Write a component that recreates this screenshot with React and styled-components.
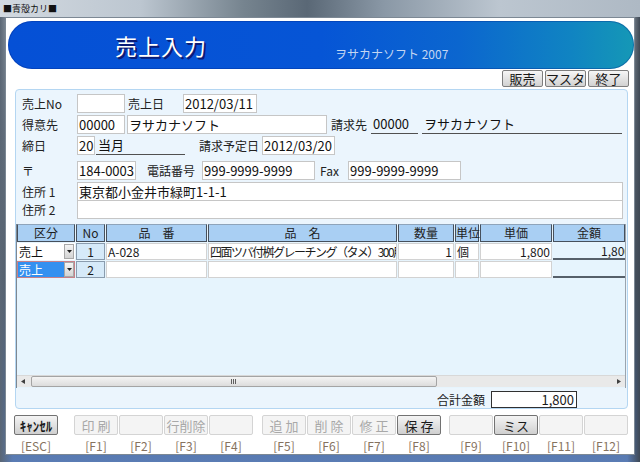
import React from "react"
import styled, { createGlobalStyle } from "styled-components"

const GlobalStyle = createGlobalStyle`
  html, body {
    margin: 0;
    padding: 0;
    background: #ffffff;
  }
  body {
    font-family: "Noto Sans CJK JP", "Noto Sans", "Liberation Sans", sans-serif;
    color: #1a1a1a;
  }
`

const FONT = `"Noto Sans CJK JP", "Noto Sans", "Liberation Sans", sans-serif`

const Window = styled.div`
  width: 640px;
  height: 462px;
  display: flex;
  flex-direction: column;
  background: linear-gradient(
    to bottom,
    #aeb8c2 0%,
    #6c7886 30%,
    #4e5a68 60%,
    #4a6a9c 85%,
    #5a7cb4 100%
  );
  overflow: hidden;
`

const TitleBar = styled.div`
  height: 17px;
  flex: none;
  display: flex;
  align-items: center;
  padding-left: 3px;
  font-size: 9px;
  line-height: 1;
  color: #111;
  background: linear-gradient(
    to right,
    #d2d9e0 0%,
    #bcc6d0 22%,
    #76848f 38%,
    #5a6876 48%,
    #8a98a6 60%,
    #bcc6d0 78%,
    #aeb9c4 100%
  );
`

const Frame = styled.div`
  flex: 1;
  display: flex;
  padding: 0 7px 7px 5px;
  background: linear-gradient(
    to right,
    #5a6674 0%,
    transparent 2%,
    transparent 98%,
    #3e4854 100%
  );
`

const Client = styled.div`
  flex: 1;
  background: #ffffff;
  border: 1px solid #7c8894;
  display: flex;
  flex-direction: column;
`

const Banner = styled.div`
  margin: 3px 0 0 2px;
  height: 48px;
  border-radius: 24px;
  background: linear-gradient(
    to right,
    #0550d6 0%,
    #0655d6 50%,
    #0b66cf 72%,
    #1084c2 90%,
    #1598b6 100%
  );
  box-shadow: inset 0 0 0 1px rgba(0, 40, 140, 0.35);
  display: flex;
  align-items: center;
`

const BannerTitle = styled.div`
  margin-left: 107px;
  font-size: 22px;
  line-height: 1;
  color: #ffffff;
  letter-spacing: 1px;
  text-shadow: 1px 1px 0 #0a1c78, 2px 2px 0 #0a1c78;
`

const BannerSub = styled.div`
  margin-left: 128px;
  margin-top: 17px;
  font-size: 12px;
  line-height: 1;
  color: #c4d6f2;
`

const TopBar = styled.div`
  display: flex;
  justify-content: flex-end;
  gap: 2px;
  margin-top: 1px;
  padding-right: 5px;
`

const TopButton = styled.button`
  width: 41px;
  height: 17px;
  padding: 0;
  font-family: ${FONT};
  font-size: 13px;
  line-height: 1;
  color: #1a1a1a;
  border: 1px solid #7e7e7e;
  border-radius: 2px;
  background: linear-gradient(to bottom, #f6f6f6 0%, #e4e4e4 50%, #d2d2d2 100%);
`

const Panel = styled.div`
  margin: 2px 6px 0 9px;
  height: 320px;
  border: 1px solid #b4d6f2;
  border-radius: 4px;
  background: #ebf5fd;
  display: flex;
  flex-direction: column;
  padding-top: 4px;
  box-sizing: border-box;
`

const FormRow = styled.div`
  display: flex;
  align-items: center;
  height: 19px;
  padding-left: 6px;
  margin-top: ${p => p.mt ?? 2}px;
`

const Label = styled.div`
  width: ${p => p.w}px;
  margin-left: ${p => p.ml || 0}px;
  flex: none;
  font-size: 12px;
  line-height: 1;
  color: #222;
  white-space: nowrap;
`

const Field = styled.div`
  width: ${p => p.w}px;
  margin-left: ${p => p.ml || 0}px;
  height: 19px;
  flex: none;
  box-sizing: border-box;
  border: 1px solid #c6c6c6;
  background: #ffffff;
  padding: 0 1px;
  font-size: 13px;
  line-height: 17px;
  color: #111;
  white-space: nowrap;
  overflow: hidden;
`

const Underlined = styled.div`
  width: ${p => p.w}px;
  margin-left: ${p => p.ml || 0}px;
  height: 19px;
  flex: none;
  box-sizing: border-box;
  border-bottom: 1px solid #505050;
  padding-left: 2px;
  font-size: 13px;
  line-height: 18px;
  color: #111;
  white-space: nowrap;
`

const GridBox = styled.div`
  margin-top: 5px;
  margin-right: 1px;
  height: 164px;
  box-sizing: border-box;
  border-left: 1px solid #7e8892;
  border-right: 1px solid #9aa4ae;
  background: #e6f4fd;
  display: flex;
  flex-direction: column;
  overflow: hidden;
`

const GridRow = styled.div`
  display: grid;
  grid-template-columns: 58px 29px 101px 189px 56px 24px 72px 72px;
  column-gap: 1px;
  height: ${p => p.h}px;
  margin-top: ${p => p.mt || 0}px;
`

const HeadCell = styled.div`
  box-sizing: border-box;
  border: 1px solid #46505c;
  border-top-color: #8ea4ba;
  background: #a9cff3;
  font-size: 12px;
  line-height: 16px;
  text-align: center;
  color: #1e1e1e;
  white-space: nowrap;
`

const TextCell = styled.div`
  box-sizing: border-box;
  border: 1px solid #d2d2d2;
  background: #ffffff;
  padding: 0 1px;
  font-size: 12px;
  line-height: 15px;
  letter-spacing: ${p => (p.tight ? "-1.5px" : "0")};
  text-align: ${p => p.align || "left"};
  white-space: nowrap;
  overflow: hidden;
`

const NoCell = styled.div`
  box-sizing: border-box;
  border: 1px solid #8a9cae;
  background: #d6eaf9;
  font-size: 12px;
  line-height: 15px;
  text-align: center;
`

const AmountCell = styled.div`
  box-sizing: border-box;
  border-bottom: 2px solid #56606a;
  font-size: 12px;
  line-height: 15px;
  text-align: right;
  white-space: nowrap;
  overflow: hidden;
  margin-right: -6px;
`

const KubunCell = styled.div`
  box-sizing: border-box;
  display: flex;
  align-items: stretch;
  border: 1px solid ${p => (p.selected ? "#c88088" : "#ffffff")};
  background: #ffffff;
`

const KubunText = styled.div`
  flex: 1;
  font-size: 12px;
  line-height: 15px;
  padding-left: 1px;
  background: ${p => (p.selected ? "#3390f0" : "transparent")};
  color: ${p => (p.selected ? "#ffffff" : "#111")};
`

const DropButton = styled.div`
  width: 10px;
  flex: none;
  box-sizing: border-box;
  border: 1px solid #a8a8a8;
  background: linear-gradient(to bottom, #f4f4f4, #d4d4d4);
  display: flex;
  align-items: center;
  justify-content: center;
`

const GridSpace = styled.div`
  flex: 1;
`

const HScroll = styled.div`
  height: 11px;
  flex: none;
  display: flex;
  align-items: stretch;
  background: #e9e9e9;
  border-top: 1px solid #d8d8d8;
  margin-bottom: 1px;
`

const ScrollArrow = styled.div`
  width: 12px;
  flex: none;
  display: flex;
  align-items: center;
  justify-content: center;
`

const ScrollThumb = styled.div`
  width: 406px;
  margin-left: 2px;
  box-sizing: border-box;
  border: 1px solid #a4a4a4;
  border-radius: 2px;
  background: linear-gradient(to bottom, #f4f4f4, #dcdcdc);
  display: flex;
  align-items: center;
  justify-content: center;
`

const TotalRow = styled.div`
  display: flex;
  align-items: center;
  margin-top: 3px;
  padding-left: 421px;
`

const TotalLabel = styled.div`
  font-size: 12px;
  line-height: 1;
  width: 54px;
`

const TotalField = styled.div`
  width: 86px;
  height: 17px;
  box-sizing: border-box;
  border: 1px solid #303030;
  background: #ffffff;
  padding-right: 2px;
  font-size: 13px;
  line-height: 15px;
  text-align: right;
`

const KeyBar = styled.div`
  display: flex;
  margin-top: 6px;
  padding-left: 8px;
`

const KeyGroup = styled.div`
  display: flex;
  gap: 1px;
  margin-left: ${p => p.ml || 0}px;
`

const KeyCol = styled.div`
  width: 44px;
  display: flex;
  flex-direction: column;
  align-items: center;
`

const KeyButton = styled.button`
  width: 44px;
  height: 20px;
  padding: 0;
  box-sizing: border-box;
  font-family: ${FONT};
  font-size: 13px;
  line-height: 1;
  white-space: nowrap;
  border-radius: 2px;
  border: 1px solid ${p => (p.active ? "#727272" : "#d4d4d4")};
  color: ${p => (p.active ? "#1a1a1a" : "#a8a8a8")};
  font-weight: ${p => (p.bold ? 700 : 400)};
  letter-spacing: ${p => (p.spaced ? "3px" : "0")};
  text-indent: ${p => (p.spaced ? "3px" : "0")};
  background: ${p =>
    p.active
      ? "linear-gradient(to bottom, #f4f4f4 0%, #e2e2e2 50%, #cfcfcf 100%)"
      : "#f4f4f4"};
`

const KeyLabel = styled.div`
  margin-top: 5px;
  font-size: 12px;
  line-height: 12px;
  color: #86725e;
`

const Caret = ({ dir }) => (
  <svg width="4" height="5" viewBox="0 0 4 5">
    {dir === "left" ? (
      <polygon points="4,0 4,5 0,2.5" fill="#404040" />
    ) : (
      <polygon points="0,0 0,5 4,2.5" fill="#404040" />
    )}
  </svg>
)

const DownCaret = () => (
  <svg width="5" height="3" viewBox="0 0 5 3">
    <polygon points="0,0 5,0 2.5,3" fill="#202020" />
  </svg>
)

const Grip = () => (
  <svg width="6" height="5" viewBox="0 0 6 5">
    <rect x="0" y="0" width="1" height="5" fill="#606060" />
    <rect x="2" y="0" width="1" height="5" fill="#606060" />
    <rect x="4" y="0" width="1" height="5" fill="#606060" />
  </svg>
)

const heads = ["区分", "No", "品　番", "品　名", "数量", "単位", "単価", "金額"]

const groups = [
  { ml: 0, keys: [{ t: "ｷｬﾝｾﾙ", k: "[ESC]", active: true, bold: true }] },
  {
    ml: 16,
    keys: [
      { t: "印刷", k: "[F1]", spaced: true },
      { t: "", k: "[F2]" },
      { t: "行削除", k: "[F3]" },
      { t: "", k: "[F4]" },
    ],
  },
  {
    ml: 9,
    keys: [
      { t: "追加", k: "[F5]", spaced: true },
      { t: "削除", k: "[F6]", spaced: true },
      { t: "修正", k: "[F7]", spaced: true },
      { t: "保存", k: "[F8]", spaced: true, active: true },
    ],
  },
  {
    ml: 8,
    keys: [
      { t: "", k: "[F9]" },
      { t: "ミス", k: "[F10]", active: true },
      { t: "", k: "[F11]" },
      { t: "", k: "[F12]" },
    ],
  },
]

const App = () => (
  <>
    <GlobalStyle />
    <Window>
      <TitleBar>■青殻カリ■</TitleBar>
      <Frame>
        <Client>
          <Banner>
            <BannerTitle>売上入力</BannerTitle>
            <BannerSub>ヲサカナソフト 2007</BannerSub>
          </Banner>

          <TopBar>
            <TopButton>販売</TopButton>
            <TopButton>マスタ</TopButton>
            <TopButton>終了</TopButton>
          </TopBar>

          <Panel>
            <FormRow mt={0}>
              <Label w={55}>売上No</Label>
              <Field w={48} />
              <Label w={55} ml={3}>売上日</Label>
              <Field w={74}>2012/03/11</Field>
            </FormRow>
            <FormRow>
              <Label w={55}>得意先</Label>
              <Field w={48}>00000</Field>
              <Field w={200} ml={2}>ヲサカナソフト</Field>
              <Label w={40} ml={4}>請求先</Label>
              <Underlined w={47}>00000</Underlined>
              <Underlined w={200} ml={4}>ヲサカナソフト</Underlined>
            </FormRow>
            <FormRow>
              <Label w={55}>締日</Label>
              <Field w={18}>20</Field>
              <Underlined w={89} ml={1}>当月</Underlined>
              <Label w={63} ml={14}>請求予定日</Label>
              <Field w={73}>2012/03/20</Field>
            </FormRow>
            <FormRow mt={6}>
              <Label w={55}>〒</Label>
              <Field w={59}>184-0003</Field>
              <Label w={55} ml={11}>電話番号</Label>
              <Field w={113}>999-9999-9999</Field>
              <Label w={28} ml={5}>Fax</Label>
              <Field w={113}>999-9999-9999</Field>
            </FormRow>
            <FormRow>
              <Label w={55}>住所 1</Label>
              <Field w={546}>東京都小金井市緑町1-1-1</Field>
            </FormRow>
            <FormRow mt={-1}>
              <Label w={55}>住所 2</Label>
              <Field w={546} />
            </FormRow>

            <GridBox>
              <GridRow h={18}>
                {heads.map(h => (
                  <HeadCell key={h}>{h}</HeadCell>
                ))}
              </GridRow>
              <GridRow h={17} mt={1}>
                <KubunCell>
                  <KubunText>売上</KubunText>
                  <DropButton>
                    <DownCaret />
                  </DropButton>
                </KubunCell>
                <NoCell>1</NoCell>
                <TextCell>A-028</TextCell>
                <TextCell tight>四面ツバ付桝グレーチング（タメ）300用</TextCell>
                <TextCell align="right">1</TextCell>
                <TextCell>個</TextCell>
                <TextCell align="right">1,800</TextCell>
                <AmountCell>1,800</AmountCell>
              </GridRow>
              <GridRow h={17} mt={1}>
                <KubunCell selected>
                  <KubunText selected>売上</KubunText>
                  <DropButton>
                    <DownCaret />
                  </DropButton>
                </KubunCell>
                <NoCell>2</NoCell>
                <TextCell />
                <TextCell />
                <TextCell />
                <TextCell />
                <TextCell />
                <AmountCell />
              </GridRow>
              <GridSpace />
              <HScroll>
                <ScrollArrow>
                  <Caret dir="left" />
                </ScrollArrow>
                <ScrollThumb>
                  <Grip />
                </ScrollThumb>
                <GridSpace />
                <ScrollArrow>
                  <Caret dir="right" />
                </ScrollArrow>
              </HScroll>
            </GridBox>

            <TotalRow>
              <TotalLabel>合計金額</TotalLabel>
              <TotalField>1,800</TotalField>
            </TotalRow>
          </Panel>

          <KeyBar>
            {groups.map((g, i) => (
              <KeyGroup key={i} ml={g.ml}>
                {g.keys.map(k => (
                  <KeyCol key={k.k}>
                    <KeyButton active={k.active} bold={k.bold} spaced={k.spaced}>
                      {k.t}
                    </KeyButton>
                    <KeyLabel>{k.k}</KeyLabel>
                  </KeyCol>
                ))}
              </KeyGroup>
            ))}
          </KeyBar>
        </Client>
      </Frame>
    </Window>
  </>
)

export default App
